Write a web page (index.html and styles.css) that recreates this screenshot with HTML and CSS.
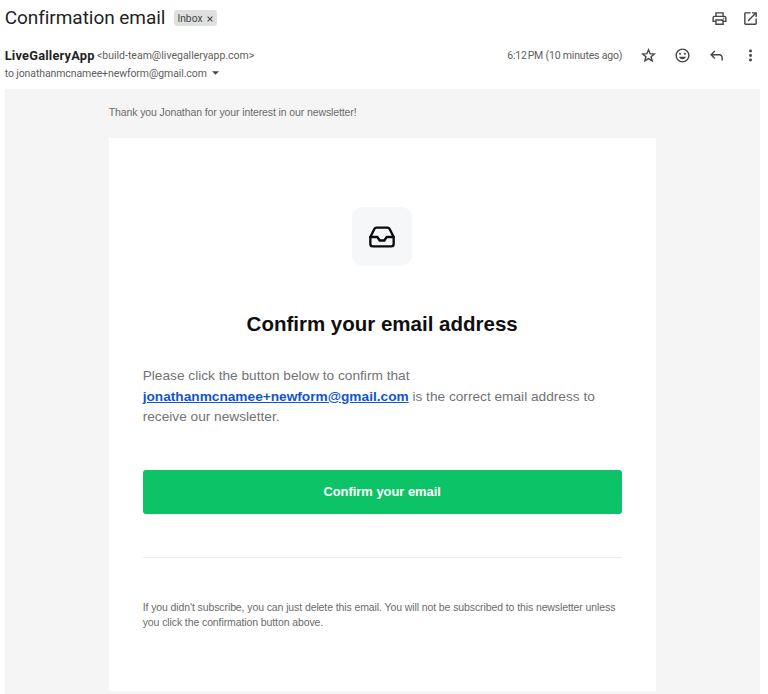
FILE: index.html
```html
<!DOCTYPE html>
<html lang="en">
<head>
<meta charset="utf-8">
<title>Confirmation email</title>
<link rel="stylesheet" href="styles.css">
</head>
<body>
<main class="mail">
  <header class="subject-bar">
    <h1 class="subject">Confirmation email</h1>
    <span class="label"><span class="label-name">Inbox</span><svg class="label-close" viewBox="0 0 6 6"><path d="M.6.6l4.8 4.8M5.4.6L.6 5.4"/></svg></span>
    <div class="subject-actions">
      <svg class="icon" viewBox="0 0 24 24"><path d="M19 8h-1V3H6v5H5c-1.66 0-3 1.34-3 3v6h4v4h12v-4h4v-6c0-1.66-1.34-3-3-3zM8 5h8v3H8V5zm8 12v2H8v-4h8v2zm2-2v-2H6v2H4v-4c0-.55.45-1 1-1h14c.55 0 1 .45 1 1v4h-2z"/><circle cx="18" cy="11.5" r="1"/></svg>
      <svg class="icon" viewBox="0 0 24 24"><path d="M19 19H5V5h7V3H5c-1.11 0-2 .9-2 2v14c0 1.1.89 2 2 2h14c1.1 0 2-.9 2-2v-7h-2v7zM14 3v2h3.59l-9.83 9.83 1.41 1.41L19 6.41V10h2V3h-7z"/></svg>
    </div>
  </header>
  <section class="sender-bar">
    <div class="sender">
      <div class="sender-line"><strong class="sender-name">LiveGalleryApp</strong><span class="sender-address">&lt;build-team@livegalleryapp.com&gt;</span></div>
      <div class="recipient-line"><span class="recipient">to jonathanmcnamee+newform@gmail.com</span><svg class="caret" viewBox="0 0 8 4"><path d="M0 0h8L4 4z"/></svg></div>
    </div>
    <time class="time">6:12&#8202;PM (10 minutes ago)</time>
    <div class="mail-actions">
      <svg class="icon star" viewBox="0 0 24 24"><path d="M12 4l2.300 5.400 5.900.5-4.500 3.900 1.400 5.700-5.100-3.100-5.100 3.100 1.400-5.700-4.500-3.900 5.900-.5z"/></svg>
      <svg class="icon" viewBox="0 0 24 24"><path d="M12 2a10 10 0 1 0 0 20 10 10 0 0 0 0-20zm0 18a8 8 0 1 1 0-16 8 8 0 0 1 0 16z"/><circle cx="8.5" cy="9.5" r="1.5"/><circle cx="15.5" cy="9.5" r="1.5"/><path d="M7 13.700c.8 2.200 2.700 3.600 5 3.600s4.200-1.400 5-3.600z"/></svg>
      <svg class="icon" viewBox="0 0 24 24"><path d="M19 19v-4c0-1.660-1.340-3-3-3H6.830l3.580 3.590L9 17l-6-6 6-6 1.410 1.410L6.830 10H16c2.760 0 5 2.240 5 5v4h-2z"/></svg>
      <svg class="icon" viewBox="0 0 24 24"><circle cx="12" cy="5.800" r="2.100"/><circle cx="12" cy="12" r="2.100"/><circle cx="12" cy="18.200" r="2.100"/></svg>
    </div>
  </section>
  <article class="message">
    <p class="preheader">Thank you Jonathan for your interest in our newsletter!</p>
    <div class="card">
      <div class="badge"><svg class="inbox" viewBox="0 0 24 24"><path d="M22 12h-6l-2 3h-4l-2-3H2"/><path d="M5.450 5.110L2 12v6a2 2 0 0 0 2 2h16a2 2 0 0 0 2-2v-6l-3.450-6.890A2 2 0 0 0 16.760 4H7.240a2 2 0 0 0-1.790 1.110z"/></svg></div>
      <h2 class="title">Confirm your email address</h2>
      <p class="copy">Please click the button below to confirm that <a class="address" href="#">jonathanmcnamee+newform@gmail.com</a> is the correct email address to receive our newsletter.</p>
      <a class="button" href="#">Confirm your email</a>
      <hr class="divider">
      <p class="note">If you didn't subscribe, you can just delete this email. You will not be subscribed to this newsletter unless you click the confirmation button above.</p>
    </div>
  </article>
</main>
</body>
</html>
```
FILE: styles.css
```css
* { box-sizing: border-box; }

body {
  margin: 0;
  background: #fff;
  font-family: "Liberation Sans", Arial, sans-serif;
  overflow: hidden;
}

h1, h2, p { margin: 0; }

.mail {
  width: 768px;
  height: 694px;
  padding: 0 8.400px 0 4.700px;
}

.subject-bar {
  display: flex;
  align-items: center;
  height: 36px;
  color: #1f1f1f;
  font-family: Roboto, sans-serif;
}

.subject {
  width: 169px;
  font-size: 19px;
  font-weight: 400;
  line-height: 24px;
  letter-spacing: -0.050px;
  white-space: nowrap;
}

.label {
  display: flex;
  align-items: center;
  gap: 4.500px;
  width: 43px;
  height: 15.500px;
  padding-left: 3.700px;
  border-radius: 3px;
  background: #dfe1df;
  color: #444746;
  font-size: 10.300px;
}

.label-close {
  width: 6px;
  height: 6px;
  margin-top: 2px;
  stroke: #444746;
  stroke-width: 1.100;
}

.subject-actions {
  display: flex;
  gap: 14px;
  margin-left: auto;
  margin-right: 0.400px;
}

.icon {
  display: block;
  width: 17px;
  height: 17px;
  fill: #444746;
}

.star {
  fill: none;
  stroke: #444746;
  stroke-width: 2;
}

.sender-bar {
  display: flex;
  height: 52.500px;
  padding-top: 11px;
  color: #5e5e5e;
  font-family: Roboto, sans-serif;
  font-size: 10.500px;
}

.mail-actions .icon { margin-top: 0.400px; }

.sender { flex: 1; }

.sender-line,
.recipient-line {
  display: flex;
  align-items: center;
  height: 17.500px;
  white-space: nowrap;
}

.sender-name {
  width: 92.300px;
  color: #1f1f1f;
  font-size: 12.800px;
  font-weight: 700;
  letter-spacing: 0.220px;
}

.recipient { letter-spacing: -0.100px; }

.caret {
  width: 7px;
  height: 4px;
  margin-left: 5px;
  fill: #444746;
}

.time {
  height: 17.500px;
  line-height: 17.500px;
  letter-spacing: -0.180px;
}

.mail-actions {
  display: flex;
  gap: 17.200px;
  margin-left: 17.500px;
  margin-right: 0.300px;
}

.message {
  height: 605.500px;
  padding: 15.400px 104px 0;
  background: #f5f5f5;
}

.preheader {
  height: 34.200px;
  color: #6b6b6b;
  font-size: 10.500px;
  letter-spacing: -0.110px;
  line-height: 16px;
}

.card {
  height: 552.500px;
  padding: 69px 34px 0;
  background: #fff;
}

.badge {
  display: grid;
  place-items: center;
  width: 60px;
  height: 59px;
  margin: 0 auto;
  border-radius: 11px;
  background: #f6f7f9;
}

.inbox {
  width: 28px;
  height: 28px;
  fill: none;
  stroke: #0b0b0b;
  stroke-width: 2;
  stroke-linecap: round;
  stroke-linejoin: round;
}

.title {
  margin-top: 44px;
  color: #0f0f0f;
  font-size: 20.500px;
  line-height: 28px;
  text-align: center;
}

.copy {
  margin-top: 28px;
  color: #737373;
  font-size: 13.680px;
  line-height: 20.500px;
}

.address {
  color: #1155cc;
  font-weight: 700;
}

.button {
  display: block;
  height: 44px;
  margin-top: 42px;
  border-radius: 3px;
  background: #0cc368;
  color: #fff;
  font-size: 12.900px;
  font-weight: 700;
  line-height: 44px;
  text-align: center;
  text-decoration: none;
}

.divider {
  height: 1px;
  margin: 43px 0 42px;
  border: 0;
  background: #eee;
}

.note {
  color: #6b6b6b;
  font-size: 10.500px;
  letter-spacing: -0.100px;
  line-height: 15.500px;
}
```
